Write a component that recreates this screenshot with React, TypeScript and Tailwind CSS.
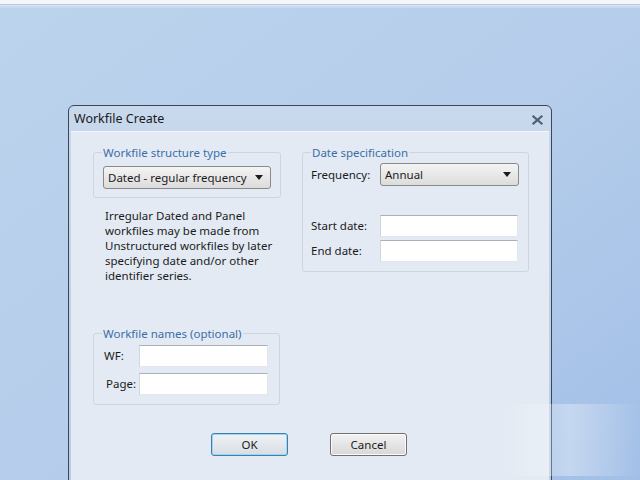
import React from 'react'

const font = { fontFamily: '"Segoe UI", "Noto Sans", "Open Sans", sans-serif' }

const Group = ({ title, className, children }: { title: string; className?: string; children: React.ReactNode }) => (
  <fieldset className={`border border-[#cdd5de] rounded-[3px] ${className ?? ''}`}>
    <legend className="ml-[8px] px-[1px] text-[11.5px] leading-[15px] text-[#3a6ea8]">{title}</legend>
    {children}
  </fieldset>
)

const Combo = ({ value, className }: { value: string; className?: string }) => (
  <div
    className={`h-[23px] flex items-center justify-between pl-[4px] pr-[7px] rounded-[3px] border border-[#8a8a8a] bg-gradient-to-b from-[#f4f4f4] to-[#dcdcdc] text-[11.5px] text-[#1b1b1b] ${className ?? ''}`}
  >
    <span>{value}</span>
    <svg width="8" height="5" viewBox="0 0 8 5">
      <path d="M0 0h8L4 5z" fill="#1b1b1b" />
    </svg>
  </div>
)

const Field = ({ className }: { className?: string }) => (
  <div className={`h-[22px] bg-white border border-[#e2e7ee] border-t-[#a9b0ba] border-l-[#d0d6de] ${className ?? ''}`} />
)

export default function App() {
  return (
    <div className="relative h-[480px] w-[640px] overflow-hidden bg-gradient-to-br from-[#bcd3ed] via-[#b6ceeb] to-[#a2bfe7]" style={font}>
      <div className="h-[4px] bg-[#f3f6fa]" />
      <div className="h-px bg-[#c2cad6]" />
      <div className="h-[3px] bg-gradient-to-b from-[#d9e5f3] to-[#bfd5ee]" />

      <div className="pl-[68px] pt-[97px]">
        <div className="w-[484px] h-[380px] rounded-t-[6px] border border-[#3c4756] bg-gradient-to-b from-[#c8d8ed] to-[#b9cde7] px-[1px]">
          <div className="h-[25px] flex items-center justify-between pl-[4px] pr-[7px] pt-[2px]">
            <span className="text-[12.5px] text-[#1a1a1a]">Workfile Create</span>
            <svg width="11" height="10" viewBox="0 0 11 10">
              <path d="M1.5 1.5l8 7M9.5 1.5l-8 7" stroke="#536072" strokeWidth="2.2" strokeLinecap="square" />
            </svg>
          </div>

          <div className="mx-[1px] h-[354px] bg-[#e3eaf3] border-t border-[#f2f6fb] pl-[22px] pt-[13px] text-[11.5px] text-[#1b1b1b]">
            <div className="flex gap-[21px]">
              <div className="w-[188px]">
                <Group title="Workfile structure type" className="pb-[8px]">
                  <div className="px-[9px] pt-[6px]">
                    <Combo value="Dated - regular frequency" />
                  </div>
                </Group>

                <p className="mt-[10px] pl-[12px] leading-[15px]">
                  Irregular Dated and Panel<br />
                  workfiles may be made from<br />
                  Unstructured workfiles by later<br />
                  specifying date and/or other<br />
                  identifier series.
                </p>

                <Group title="Workfile names (optional)" className="mt-[43px] w-[187px] pb-[9px]">
                  <div className="pt-[4px] pr-[11px] flex flex-col gap-[6px]">
                    <div className="flex items-center">
                      <span className="w-[45px] pl-[10px]">WF:</span>
                      <Field className="flex-1" />
                    </div>
                    <div className="flex items-center">
                      <span className="w-[45px] pl-[12px]">Page:</span>
                      <Field className="flex-1" />
                    </div>
                  </div>
                </Group>
              </div>

              <div className="w-[227px]">
                <Group title="Date specification" className="pb-[9px]">
                  <div className="pl-[8px] pr-[9px] pt-[3px]">
                    <div className="flex items-center">
                      <span className="w-[69px]">Frequency:</span>
                      <Combo value="Annual" className="flex-1" />
                    </div>
                    <div className="mt-[29px] flex items-center">
                      <span className="w-[69px]">Start date:</span>
                      <Field className="flex-1 mr-px" />
                    </div>
                    <div className="mt-[3px] flex items-center">
                      <span className="w-[69px]">End date:</span>
                      <Field className="flex-1 mr-px" />
                    </div>
                  </div>
                </Group>
              </div>
            </div>

            <div className="mt-[28px] flex justify-center gap-[42px] pr-[24px]">
              <button className="w-[77px] h-[23px] rounded-[3px] border border-[#3c7fb1] shadow-[inset_0_0_0_1px_#9fd5f0] bg-gradient-to-b from-[#f1f3f5] to-[#d6dde4] text-[11.5px] text-[#1b1b1b]">
                OK
              </button>
              <button className="w-[77px] h-[23px] rounded-[3px] border border-[#707070] shadow-[inset_0_0_0_1px_#fbfbfb] bg-gradient-to-b from-[#f2f2f2] to-[#d8d8d8] text-[11.5px] text-[#1b1b1b]">
                Cancel
              </button>
            </div>
          </div>
        </div>
      </div>

      <div className="absolute left-[500px] top-[404px] w-[140px] h-[72px] bg-gradient-to-r from-white/0 via-white/35 to-white/0" />
    </div>
  )
}
